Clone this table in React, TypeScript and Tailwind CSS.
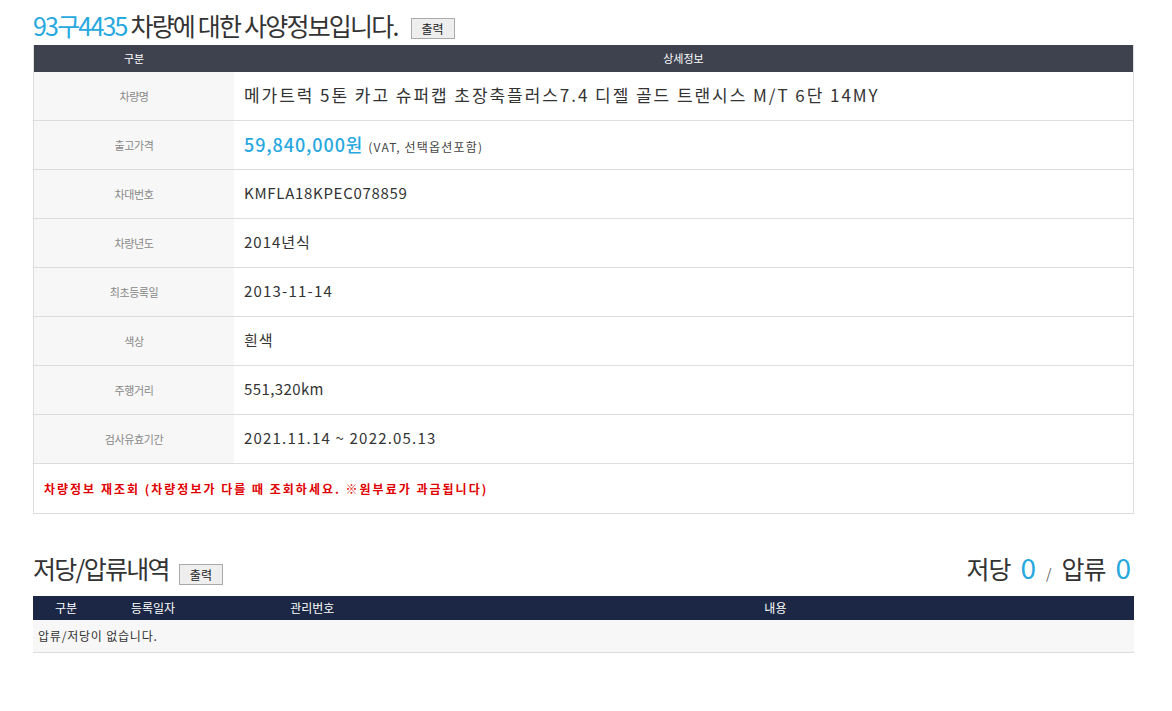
import React from "react";

const font = { fontFamily: '"Noto Sans CJK KR", "Noto Sans", sans-serif' };

const rows: { label: string; value: React.ReactNode }[] = [
  {
    label: "차량명",
    value: <span className="text-[17px] text-[#333] tracking-[1.95px]">메가트럭 5톤 카고 슈퍼캡 초장축플러스7.4 디젤 골드 트랜시스 M/T 6단 14MY</span>,
  },
  {
    label: "출고가격",
    value: (
      <span className="flex items-baseline">
        <span className="text-[18px] text-[#27a8de] font-medium tracking-[0.9px]">59,840,000원</span>
        <span className="text-[12px] text-[#444] ml-[5px] tracking-[1.2px]">(VAT, 선택옵션포함)</span>
      </span>
    ),
  },
  { label: "차대번호", value: <span className="text-[15px] text-[#333] tracking-[0.7px]">KMFLA18KPEC078859</span> },
  { label: "차량년도", value: <span className="text-[15px] text-[#333] tracking-[1px]">2014년식</span> },
  { label: "최초등록일", value: <span className="text-[15px] text-[#333] tracking-[1.2px]">2013-11-14</span> },
  { label: "색상", value: <span className="text-[15px] text-[#333] tracking-[1px]">흰색</span> },
  { label: "주행거리", value: <span className="text-[15px] text-[#333] tracking-[0.4px]">551,320km</span> },
  { label: "검사유효기간", value: <span className="text-[15px] text-[#333] tracking-[1.2px]">2021.11.14 ~ 2022.05.13</span> },
];

function PrintButton() {
  return (
    <button className="h-[21px] w-[44px] border border-[#aaa] bg-[#eeeeee] text-[12px] text-[#222] leading-none flex items-center justify-center">
      출력
    </button>
  );
}

export default function App() {
  return (
    <div className="bg-white w-[1172px] h-[711px]" style={font}>
      <div className="ml-[33px] w-[1101px]">
        <div className="h-[45px] flex items-end pb-[7px]">
          <h1 className="text-[25px] leading-none tracking-[-1.8px] text-[#333] font-normal">
            <span className="text-[#27a8de]">93구4435</span> 차량에 대한 사양정보입니다.
          </h1>
          <div className="ml-[13px] mb-[-1px]">
            <PrintButton />
          </div>
        </div>
        <div className="border-x border-b border-[#ddd]">
          <div className="flex h-[27px] bg-[#3e424f] text-white text-[11px] items-center">
            <div className="w-[200px] text-center">구분</div>
            <div className="flex-1 text-center">상세정보</div>
          </div>
          {rows.map((r) => (
            <div key={r.label} className="flex h-[49px] border-b border-[#ddd]">
              <div className="w-[200px] bg-[#f7f7f7] flex items-center justify-center text-[11px] tracking-[-0.4px] text-[#888]">
                {r.label}
              </div>
              <div className="flex-1 flex items-center pl-[10px] pb-[2px]">{r.value}</div>
            </div>
          ))}
          <div className="h-[49px] flex items-center pl-[10px] text-[12px] font-bold tracking-[2px] text-[#e00000]">
            차량정보 재조회 (차량정보가 다를 때 조회하세요. ※원부료가 과금됩니다)
          </div>
        </div>

        <div className="h-[82px] flex items-end pb-[15px] justify-between">
          <div className="flex items-end">
            <h2 className="text-[25px] leading-none tracking-[-1.7px] text-[#333] font-normal">저당/압류내역</h2>
            <div className="ml-[10px] mb-[-4px]">
              <PrintButton />
            </div>
          </div>
          <div className="flex items-end leading-none text-[#333] mr-[3px]">
            <span className="text-[25px] tracking-[-1px]">저당</span>
            <span className="text-[28px] text-[#27a8de] ml-[10px]">0</span>
            <span className="text-[14px] text-[#666] mx-[10px] mb-[1px]">/</span>
            <span className="text-[25px] tracking-[-1px]">압류</span>
            <span className="text-[28px] text-[#27a8de] ml-[10px]">0</span>
          </div>
        </div>
        <div className="flex h-[24px] bg-[#1b2745] text-white text-[12px] items-center">
          <div className="w-[44px] text-right">구분</div>
          <div className="ml-[54px]">등록일자</div>
          <div className="ml-[115px]">관리번호</div>
          <div className="ml-[430px]">내용</div>
        </div>
        <div className="h-[33px] bg-[#f7f7f7] border-b border-[#ddd] flex items-center pl-[5px] text-[12px] tracking-[0.8px] text-[#333]">
          압류/저당이 없습니다.
        </div>
      </div>
    </div>
  );
}
